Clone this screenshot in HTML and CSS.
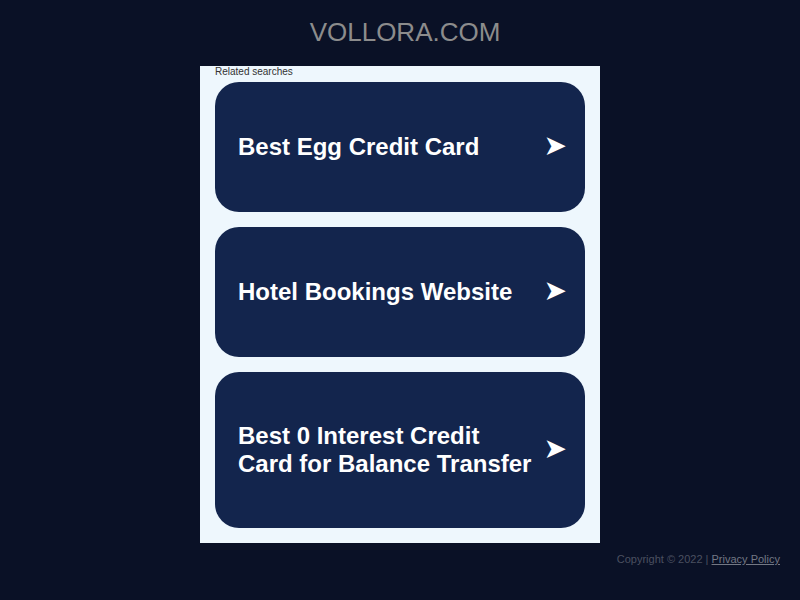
FILE: index.html
```html
<html>
<head>
<title>vollora.com</title>
<link rel="stylesheet" href="styles.css">
</head>
<body>
<div class="header">VOLLORA.COM</div>
<div class="panel">
	<div class="label">Related searches</div>
	<a class="card" href="#"><span class="text">Best Egg Credit Card</span><span class="arrow">&#10148;</span></a>
	<a class="card" href="#"><span class="text">Hotel Bookings Website</span><span class="arrow">&#10148;</span></a>
	<a class="card" href="#"><span class="text">Best 0 Interest Credit Card for Balance Transfer</span><span class="arrow">&#10148;</span></a>
</div>
<div class="footer">Copyright &copy; 2022 | <a href="#">Privacy Policy</a></div>
</body>
</html>
```

FILE: styles.css
```css
body { margin:0; background:#0a1126; font-family:"Liberation Sans", Arial, sans-serif; }
.header { height:66px; line-height:64px; padding-left:10px; text-align:center; font-size:26px; color:#8c8c8c; }
.panel { width:370px; margin:0 auto; background:#eef7fd; padding:0 15px 15px 15px; }
.label { font-size:10px; line-height:11px; padding-bottom:5px; color:#333; }
.card { display:flex; align-items:center; min-height:130px; box-sizing:border-box; padding:50px 18px 50px 23px; margin-bottom:15px; background:#13254d; border-radius:24px; color:#fff; text-decoration:none; }
.card:last-child { margin-bottom:0; }
.text { flex:1; font-size:24px; line-height:28px; font-weight:bold; }
.arrow { font-family:"DejaVu Sans", sans-serif; font-size:28px; line-height:28px; margin:0 0 2px 12px; }
.footer { text-align:right; padding:10px 20px; font-size:11px; color:#4a5060; }
.footer a { color:#737884; }
```
